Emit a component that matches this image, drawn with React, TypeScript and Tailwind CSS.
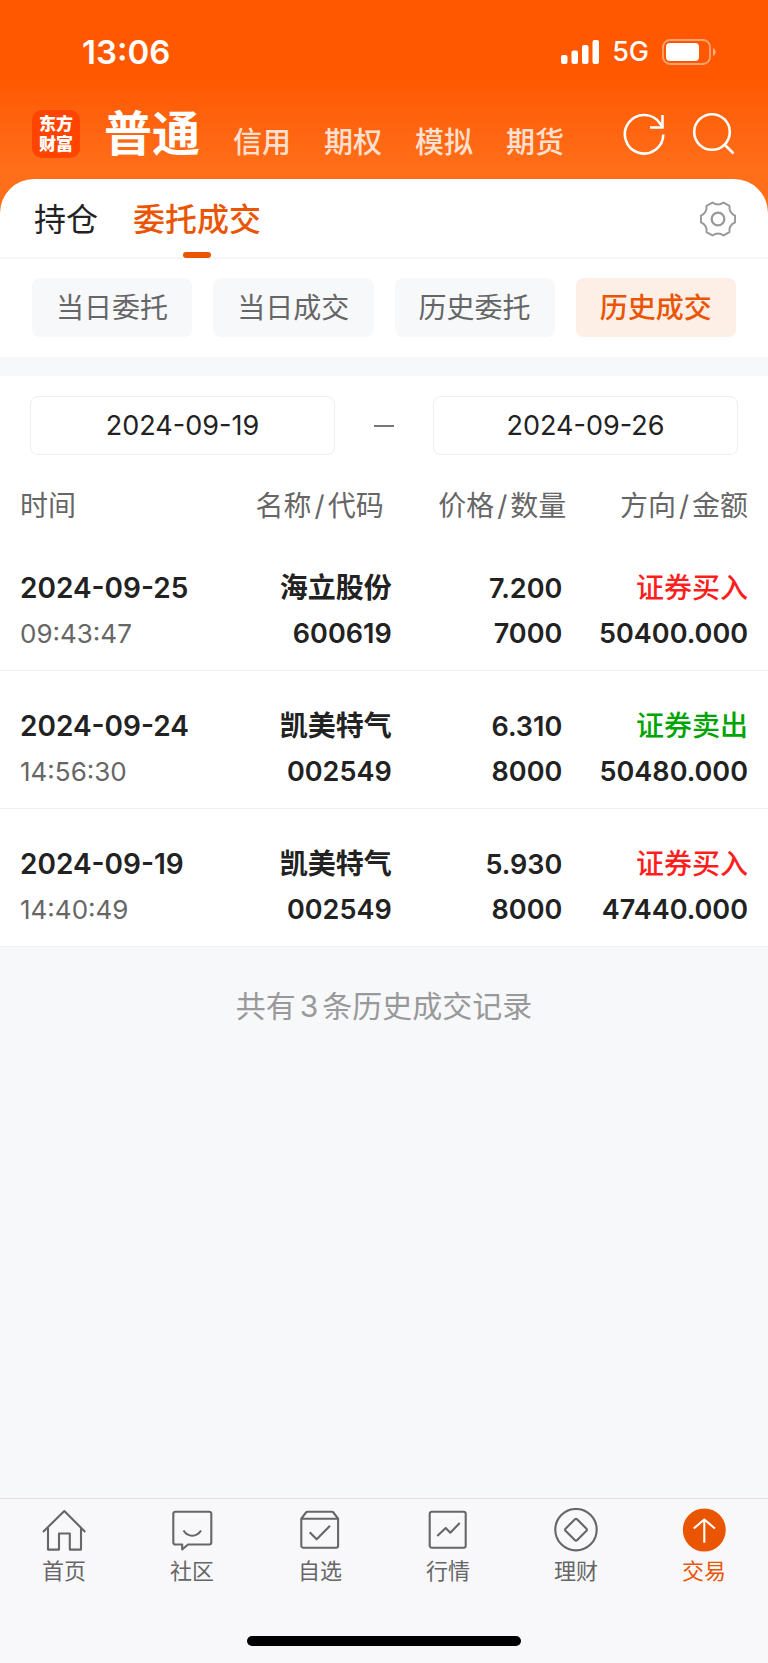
import { useState } from 'react';
import type { ReactNode } from 'react';

interface Deal {
  date: string;
  time: string;
  name: string;
  code: string;
  price: string;
  amount: string;
  side: 'buy' | 'sell';
  total: string;
}

const DEALS: Deal[] = [
  { date: '2024-09-25', time: '09:43:47', name: '海立股份', code: '600619', price: '7.200', amount: '7000', side: 'buy', total: '50400.000' },
  { date: '2024-09-24', time: '14:56:30', name: '凯美特气', code: '002549', price: '6.310', amount: '8000', side: 'sell', total: '50480.000' },
  { date: '2024-09-19', time: '14:40:49', name: '凯美特气', code: '002549', price: '5.930', amount: '8000', side: 'buy', total: '47440.000' },
];

const SIDE: Record<Deal['side'], { label: string; style: string }> = {
  buy: { label: '证券买入', style: 'text-[#ff1e1e]' },
  sell: { label: '证券卖出', style: 'text-[#00a400]' },
};

const ACCOUNTS = ['信用', '期权', '模拟', '期货'];
const FILTERS = ['当日委托', '当日成交', '历史委托', '历史成交'];

const NAV: { label: string; icon: ReactNode }[] = [
  {
    label: '首页',
    icon: (
      <>
        <path d="M1 24 22.3 3 43.3 24" />
        <path d="M6 20v21.6h11V25.5h10.8V41.6H39V20" />
      </>
    ),
  },
  {
    label: '社区',
    icon: (
      <>
        <path d="M5.3 3.7h34a2 2 0 0 1 2 2v28.8a2 2 0 0 1-2 2H18L12.2 41.5V36.5H5.3a2 2 0 0 1-2-2V5.7a2 2 0 0 1 2-2Z" />
        <path d="M13.5 22.5c4.5 7 13 7 17.5 0" />
      </>
    ),
  },
  {
    label: '自选',
    icon: (
      <>
        <path d="M3.3 10.7 8 4.5a2 2 0 0 1 1.5-.8h24.4a2 2 0 0 1 1.5.8l4.7 6.2v27a2 2 0 0 1-2 2H5.3a2 2 0 0 1-2-2ZM3.3 10.7h36.8" />
        <path d="m11.7 24.3 7 7L32 17.7" />
      </>
    ),
  },
  {
    label: '行情',
    icon: (
      <>
        <rect x="3.7" y="3.7" width="36" height="36" rx="2" />
        <path d="m11.3 28 8.4-8 4.6 4.7L33.7 15" />
      </>
    ),
  },
  {
    label: '理财',
    icon: (
      <>
        <circle cx="22" cy="21.7" r="20.7" />
        <path d="M21 11.2a1.4 1.4 0 0 1 2 0l9.5 9.5a1.4 1.4 0 0 1 0 2L23 32.2a1.4 1.4 0 0 1-2 0l-9.5-9.5a1.4 1.4 0 0 1 0-2Z" />
      </>
    ),
  },
  {
    label: '交易',
    icon: (
      <>
        <circle cx="22.3" cy="22" r="20.4" fill="currentColor" />
        <path stroke="#fff" d="M22.3 11.5v23.2M11.7 20.5l10.6-9 10.6 9" />
      </>
    ),
  },
];

function StatusBar() {
  return (
    <div className="flex h-[103px] items-center justify-between pr-[52px] pl-[82px]">
      <span className="text-[33px] leading-10 font-semibold">13:06</span>
      <div className="flex items-center gap-[13px]">
        <svg width="38" height="24" viewBox="0 0 38 24" fill="currentColor" aria-hidden="true">
          <rect y="15" width="6.5" height="9" rx="2" />
          <rect x="10.5" y="10.5" width="6.5" height="13.5" rx="2" />
          <rect x="21" y="5" width="6.5" height="19" rx="2" />
          <rect x="31.5" width="6.5" height="24" rx="2" />
        </svg>
        <span className="text-[27px] leading-8 font-medium">5G</span>
        <svg width="54" height="26" viewBox="0 0 54 26" fill="none" aria-hidden="true">
          <rect x="1" y="1" width="47" height="24" rx="7" stroke="currentColor" strokeOpacity=".45" strokeWidth="1.8" />
          <rect x="4" y="4" width="33" height="18" rx="4" fill="currentColor" />
          <path d="M51 9v8c3.5-1.5 3.5-6.5 0-8Z" fill="currentColor" fillOpacity=".5" />
        </svg>
      </div>
    </div>
  );
}

function AccountBar() {
  return (
    <div className="flex items-center px-8 pt-[7px] pb-[21px]">
      <div className="flex h-12 w-12 flex-col items-center justify-center rounded-[10px] bg-[#ff4400] text-[17px] leading-5 font-black">
        <span>东方</span>
        <span>财富</span>
      </div>
      <div className="ml-6 flex items-end gap-[33px]">
        <button className="text-5xl leading-[48px] font-bold">普通</button>
        {ACCOUNTS.map((name) => (
          <button key={name} className="text-[29px] leading-[30px] font-medium text-[#ffe0d0]">
            {name}
          </button>
        ))}
      </div>
      <div className="ml-auto flex items-center gap-[26px]">
        <button aria-label="刷新">
          <svg width="44" height="44" viewBox="0 0 44 44" fill="none" stroke="currentColor" strokeWidth="2.6">
            <path d="M41.3 22.5A19.2 19.2 0 1 1 38 11.5L40.5 15" />
            <path d="M40.5 3v12.5H28" />
          </svg>
        </button>
        <button aria-label="搜索">
          <svg width="44" height="44" viewBox="0 0 44 44" fill="none" stroke="currentColor" strokeWidth="2.6">
            <circle cx="20" cy="20" r="17.8" />
            <path d="m32 32 9.5 9.5" />
          </svg>
        </button>
      </div>
    </div>
  );
}

function PairHeading({ top, bottom }: { top: string; bottom: string }) {
  return (
    <>
      {top}
      <span className="mx-[3px]">/</span>
      {bottom}
    </>
  );
}

function DealRow({ deal }: { deal: Deal }) {
  const side = SIDE[deal.side];
  return (
    <tr className="border-b border-[#f1f1f4] text-right text-[27px] leading-[45px] font-semibold text-[#222]">
      <td className="pt-[33px] pb-[14px] pl-5 text-left text-[28px]">
        <div>{deal.date}</div>
        <div className="text-[26px] font-normal text-[#666]">{deal.time}</div>
      </td>
      <td className="pt-[33px] pb-[14px]">
        <div className="text-[28px]">{deal.name}</div>
        <div>{deal.code}</div>
      </td>
      <td className="pt-[33px] pr-1.5 pb-[14px]">
        <div>{deal.price}</div>
        <div>{deal.amount}</div>
      </td>
      <td className="pt-[33px] pr-5 pb-[14px]">
        <div className={`text-[28px] font-medium ${side.style}`}>{side.label}</div>
        <div>{deal.total}</div>
      </td>
    </tr>
  );
}

export default function App() {
  const [filter, setFilter] = useState('历史成交');
  const [from, setFrom] = useState('2024-09-19');
  const [to, setTo] = useState('2024-09-26');

  const dateBox =
    'h-[59px] min-w-0 flex-1 rounded-lg border border-[#eeeef0] bg-white text-center text-[27px] text-[#222]';

  return (
    <div className="flex min-h-screen flex-col bg-[#f7f8fa] font-['Inter','Noto_Sans_CJK_SC',sans-serif] text-[#222]">
      <header className="bg-linear-to-b from-[#ff5800] from-35% to-[#ff6f1a] to-80% pb-10 text-white">
        <StatusBar />
        <AccountBar />
      </header>

      <main className="-mt-10 flex-1">
        <section className="rounded-t-[34px] bg-white">
          <div className="flex h-20 items-center justify-between border-b-2 border-[#f5f5f7] pr-8 pl-[34px]">
            <div className="flex h-full gap-[35px] text-[32px]">
              <button className="pt-1">持仓</button>
              <button className="relative pt-1 font-medium text-[#ea5504]">
                委托成交
                <span className="absolute -bottom-px left-1/2 h-[6px] w-7 -translate-x-1/2 rounded-sm bg-[#ea5504]" />
              </button>
            </div>
            <button aria-label="设置" className="pt-0.5 text-[#999]">
              <svg width="36" height="36" viewBox="-18.5 -18.5 37 37" fill="none" stroke="currentColor" strokeWidth="2" strokeLinejoin="round">
                <path d="M-17.5 3.5V-3.5Q-11-6.4-11.8-13.4L-5.7-16.9Q0-12.7 5.7-16.9L11.8-13.4Q11-6.4 17.5-3.5V3.5Q11 6.4 11.8 13.4L5.7 16.9Q0 12.7-5.7 16.9L-11.8 13.4Q-11 6.4-17.5 3.5Z" />
                <circle r="6.5" strokeWidth="2.4" />
              </svg>
            </button>
          </div>

          <div className="grid grid-cols-4 gap-[21px] px-8 pt-[19px] pb-5 text-[28px]">
            {FILTERS.map((name) => (
              <button
                key={name}
                onClick={() => setFilter(name)}
                className={`h-[59px] rounded-lg ${
                  name === filter ? 'bg-[#fdeee6] font-medium text-[#ea5504]' : 'bg-[#f7f8fa] text-[#666]'
                }`}
              >
                {name}
              </button>
            ))}
          </div>
        </section>

        <section className="mt-[19px] bg-white">
          <div className="flex items-center gap-[39px] px-[30px] pt-5">
            <input aria-label="开始日期" value={from} onChange={(e) => setFrom(e.target.value)} className={dateBox} />
            <span className="h-0.5 w-5 bg-[#777]" />
            <input aria-label="结束日期" value={to} onChange={(e) => setTo(e.target.value)} className={dateBox} />
          </div>

          <table className="w-full table-fixed border-collapse">
            <colgroup>
              <col className="w-[30%]" />
              <col className="w-[21%]" />
              <col className="w-[23%]" />
              <col className="w-[26%]" />
            </colgroup>
            <thead>
              <tr className="h-[78px] text-right text-[28px] text-[#666]">
                <th className="pt-6 pl-5 text-left font-normal">时间</th>
                <th className="pt-6 pr-2 font-normal whitespace-nowrap">
                  <PairHeading top="名称" bottom="代码" />
                </th>
                <th className="pt-6 pr-0.5 font-normal whitespace-nowrap">
                  <PairHeading top="价格" bottom="数量" />
                </th>
                <th className="pt-6 pr-5 font-normal whitespace-nowrap">
                  <PairHeading top="方向" bottom="金额" />
                </th>
              </tr>
            </thead>
            <tbody>
              {DEALS.map((deal) => (
                <DealRow key={deal.date} deal={deal} />
              ))}
            </tbody>
          </table>
        </section>

        <p className="pt-9 text-center text-[30px] leading-[46px] text-[#999]">
          共有<span className="mx-1">3</span>条历史成交记录
        </p>
      </main>

      <footer className="border-t border-[#dedee1] bg-[#f8f8fb] pt-[9px] pb-[17px]">
        <nav className="grid grid-cols-6">
          {NAV.map(({ label, icon }) => (
            <a
              key={label}
              href="#"
              className={`flex flex-col items-center gap-[5px] text-[22px] leading-7 ${
                label === '交易' ? 'text-[#ea5504]' : 'text-[#666]'
              }`}
            >
              <svg width="44" height="44" viewBox="0 0 44 44" fill="none" stroke="currentColor" strokeWidth="2.1" strokeLinejoin="round" aria-hidden="true">
                {icon}
              </svg>
              {label}
            </a>
          ))}
        </nav>
        <div className="mx-auto mt-[51px] h-[10px] w-[274px] rounded-full bg-black" />
      </footer>
    </div>
  );
}
